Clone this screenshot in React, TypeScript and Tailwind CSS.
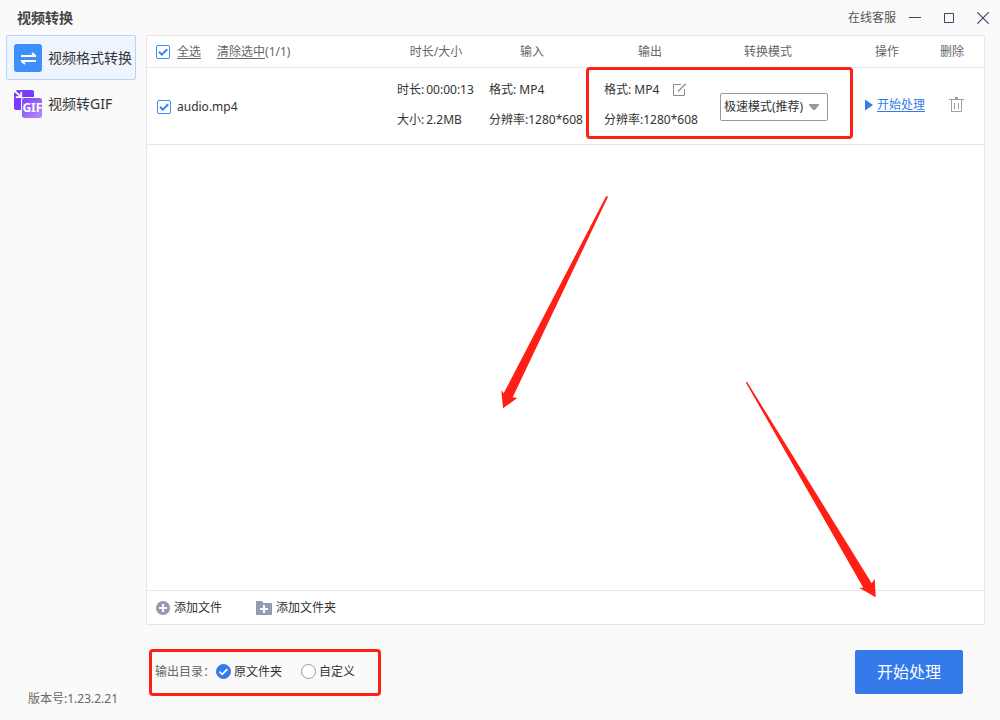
import { useState } from "react";

interface VideoFile {
  name: string;
  duration: string;
  size: string;
  format: string;
  resolution: string;
}

interface CheckboxProps {
  id: string;
  label: string;
  checked: boolean;
  onChange: (checked: boolean) => void;
}

interface RadioProps {
  value: string;
  label: string;
  selected: string;
  onSelect: (value: string) => void;
}

const files: VideoFile[] = [
  { name: "audio.mp4", duration: "00:00:13", size: "2.2MB", format: "MP4", resolution: "1280*608" },
];

const ConvertIcon = () => (
  <svg width="28" height="28" viewBox="0 0 28 28" fill="none" aria-hidden="true">
    <rect width="28" height="28" rx="3" fill="#3e8ffb" />
    <path d="M7 12h15M18 9l3.2 2.8M22 17H7M11 20l-3.2-2.8" stroke="#fff" strokeWidth="1.9" />
  </svg>
);

const GifIcon = () => (
  <svg width="28" height="28" viewBox="0 0 28 28" fill="none" aria-hidden="true">
    <defs>
      <linearGradient id="gif" x1="10" y1="8" x2="26" y2="28" gradientUnits="userSpaceOnUse">
        <stop stopColor="#7f43fa" />
        <stop offset="1" stopColor="#b18cfb" />
      </linearGradient>
    </defs>
    <rect width="20" height="20" rx="2" fill="#7a3cf8" />
    <path d="M0 0h3L0 3z" fill="#fafafa" />
    <path d="M1 1.5l6 5M7.3 1.8v5.4H1.8" stroke="#fafafa" strokeWidth="1.7" />
    <rect x="7" y="7" width="22" height="22" rx="3" fill="#fafafa" />
    <rect x="8" y="8" width="20" height="20" rx="2.5" fill="url(#gif)" />
    <text x="18.4" y="22.2" textAnchor="middle" fontSize="12" fontWeight="700" fontFamily="Noto Sans" fill="#fff">
      GIF
    </text>
  </svg>
);

const EditIcon = () => (
  <svg width="14" height="14" viewBox="0 0 14 14" fill="none" stroke="#8a8a8a" aria-hidden="true">
    <path d="M8 1.5H.5v11h11V6" />
    <path d="M5 8.5L12.8.8" strokeWidth="1.2" />
  </svg>
);

const TrashIcon = () => (
  <svg width="15" height="16" viewBox="0 0 15 16" fill="none" stroke="#a0a0a0" aria-hidden="true">
    <path d="M0 2.5h15M2.5 3v11.5h10V3M5.5 6v6M9.5 6v6" />
    <path d="M6 1h3" strokeWidth="2" />
  </svg>
);

const AddFileIcon = () => (
  <svg width="14" height="14" viewBox="0 0 14 14" aria-hidden="true">
    <circle cx="7" cy="7" r="7" fill="#949bb0" />
    <path d="M7 3v8M3 7h8" stroke="#fff" strokeWidth="2" />
  </svg>
);

const AddFolderIcon = () => (
  <svg width="16" height="14" viewBox="0 0 16 14" aria-hidden="true">
    <path d="M0 0h6l1.5 2H16v12H0z" fill="#949bb0" />
    <path d="M8 4v8M4 8h8" stroke="#fff" strokeWidth="2" />
  </svg>
);

const Checkbox = ({ id, label, checked, onChange }: CheckboxProps) => (
  <span className="relative flex size-3.5 shrink-0">
    <input
      id={id}
      type="checkbox"
      aria-label={label}
      checked={checked}
      onChange={(e) => onChange(e.target.checked)}
      className="size-3.5 appearance-none rounded-xs border border-[#3e8ffb] bg-white"
    />
    {checked && (
      <svg className="pointer-events-none absolute inset-0" width="14" height="14" viewBox="0 0 14 14" fill="none">
        <path d="M3 6.8l2.8 2.8L11.2 4.2" stroke="#3582f5" strokeWidth="2" />
      </svg>
    )}
  </span>
);

const Radio = ({ value, label, selected, onSelect }: RadioProps) => (
  <label className="flex items-center gap-[3px]">
    <span className="relative flex size-[15px]">
      <input
        type="radio"
        name="output"
        value={value}
        checked={selected === value}
        onChange={() => onSelect(value)}
        className="size-[15px] appearance-none rounded-full border border-[#999] bg-white checked:border-[#347aeb] checked:bg-[#347aeb]"
      />
      {selected === value && (
        <svg className="pointer-events-none absolute inset-0" width="15" height="15" viewBox="0 0 15 15" fill="none">
          <path d="M3.4 7.6l2.8 2.7 5.2-5.2" stroke="#fff" strokeWidth="1.8" />
        </svg>
      )}
    </span>
    {label}
  </label>
);

const TitleBar = () => (
  <header className="flex h-[35px] shrink-0 items-center justify-between pr-[11px] pl-[17px]">
    <h1 className="text-sm font-bold text-[#444]">视频转换</h1>
    <div className="flex items-center text-[#3d4663]">
      <a href="#service" className="mr-[13px] text-[#555]">在线客服</a>
      <button type="button" aria-label="最小化" className="mr-[23px]">
        <svg width="12" height="12" viewBox="0 0 12 12" stroke="currentColor">
          <path d="M0 5.5h12" />
        </svg>
      </button>
      <button type="button" aria-label="最大化" className="mr-[23px]">
        <svg width="10" height="10" viewBox="0 0 10 10" fill="none" stroke="currentColor">
          <path d="M.5.5h9v9h-9z" />
        </svg>
      </button>
      <button type="button" aria-label="关闭">
        <svg width="12" height="12" viewBox="0 0 12 12" stroke="currentColor" strokeWidth="1.2">
          <path d="M.3.3l11.4 11.4M11.7.3L.3 11.7" />
        </svg>
      </button>
    </div>
  </header>
);

const Sidebar = () => (
  <aside className="flex w-[146px] shrink-0 flex-col justify-between pr-2.5 pb-[13px] pl-1.5">
    <nav className="flex flex-col gap-px text-sm whitespace-nowrap">
      <button
        type="button"
        className="flex h-[45px] items-center gap-1.5 rounded-xs border border-[#b5d5fd] bg-[#eef5ff] pl-[7px]"
      >
        <ConvertIcon />
        视频格式转换
      </button>
      <button type="button" className="flex h-[45px] items-center gap-1.5 border border-transparent pl-[7px]">
        <GifIcon />
        视频转GIF
      </button>
    </nav>
    <p className="pl-[22px] text-[#666]">版本号:1.23.2.21</p>
  </aside>
);

const App = () => {
  const [selected, setSelected] = useState<string[]>(files.map((file) => file.name));
  const [output, setOutput] = useState("source");

  const toggle = (name: string, checked: boolean) =>
    setSelected(checked ? [...selected, name] : selected.filter((item) => item !== name));

  return (
    <div className="relative flex h-screen flex-col overflow-hidden bg-[#fafafa] font-['Noto_Sans','Noto_Sans_CJK_SC',sans-serif] text-xs text-[#333]">
      <TitleBar />
      <div className="flex min-h-0 flex-1">
        <Sidebar />
        <main className="flex min-w-0 flex-1 flex-col">
          <section className="relative mr-[15px] flex flex-1 flex-col border border-[#e6e6e6] bg-white">
            <table className="w-full table-fixed border-collapse text-left whitespace-nowrap">
              <colgroup>
                <col />
                <col className="w-[92px]" />
                <col className="w-[110px]" />
                <col className="w-[116px]" />
                <col className="w-[132px]" />
                <col className="w-[94px]" />
                <col className="w-[50px]" />
              </colgroup>
              <thead>
                <tr className="h-[31px] border-b border-[#e6e6e6] text-[#666] [&>th]:pt-0.5">
                  <th className="pl-[9px] font-normal">
                    <div className="flex items-center">
                      <Checkbox
                        id="all"
                        label="全选"
                        checked={selected.length === files.length}
                        onChange={(checked) => setSelected(checked ? files.map((file) => file.name) : [])}
                      />
                      <label htmlFor="all" className="ml-[7px] underline underline-offset-2">全选</label>
                      <button type="button" onClick={() => setSelected([])} className="ml-4 underline underline-offset-2">
                        清除选中
                      </button>
                      <span>({selected.length}/{files.length})</span>
                    </div>
                  </th>
                  <th className="text-center font-normal">时长/大小</th>
                  <th className="pr-2.5 text-center font-normal">输入</th>
                  <th className="text-center font-normal">输出</th>
                  <th className="pr-3 text-center font-normal">转换模式</th>
                  <th className="text-center font-normal">操作</th>
                  <th className="pr-3.5 text-center font-normal">删除</th>
                </tr>
              </thead>
              <tbody>
                {files.map((file) => (
                  <tr key={file.name} className="h-[77px] border-b border-[#e6e6e6]">
                    <td className="pt-0.5 pl-2.5">
                      <div className="flex items-center gap-1.5">
                        <Checkbox
                          id={file.name}
                          label={file.name}
                          checked={selected.includes(file.name)}
                          onChange={(checked) => toggle(file.name, checked)}
                        />
                        <label htmlFor={file.name}>{file.name}</label>
                      </div>
                    </td>
                    <td className="pb-0.5 pl-[7px] leading-[30px]">
                      <p className="flex gap-0.5"><span>时长:</span>{file.duration}</p>
                      <p className="flex gap-0.5"><span>大小:</span>{file.size}</p>
                    </td>
                    <td className="pb-0.5 pl-[7px] leading-[30px]">
                      <p>格式: {file.format}</p>
                      <p>分辨率:{file.resolution}</p>
                    </td>
                    <td className="pb-0.5 pl-3 leading-[30px]">
                      <p className="flex items-center gap-3.5">
                        格式: {file.format}
                        <button type="button" aria-label="编辑"><EditIcon /></button>
                      </p>
                      <p>分辨率:{file.resolution}</p>
                    </td>
                    <td className="pt-0.5 pl-3">
                      <div className="relative w-[108px]">
                        <select
                          aria-label="转换模式"
                          className="block h-7 w-full appearance-none rounded-xs border border-[#999] bg-white pl-[3px]"
                        >
                          <option>极速模式(推荐)</option>
                        </select>
                        <svg
                          className="pointer-events-none absolute top-[11px] right-2"
                          width="12"
                          height="6"
                          viewBox="0 0 12 6"
                          fill="#999"
                        >
                          <path d="M1 0h10v1L7 6H5L1 1z" />
                        </svg>
                      </div>
                    </td>
                    <td className="pb-0.5 pl-[25px]">
                      <button type="button" className="flex items-center gap-1 text-[#347aeb]">
                        <svg width="8" height="12" viewBox="0 0 8 12" fill="currentColor" aria-hidden="true">
                          <path d="M0 0.5L8 6l-8 5.5z" />
                        </svg>
                        <span className="underline underline-offset-2">开始处理</span>
                      </button>
                    </td>
                    <td className="pr-1.5 pb-0.5">
                      <button type="button" aria-label="删除" className="mx-auto block"><TrashIcon /></button>
                    </td>
                  </tr>
                ))}
              </tbody>
            </table>
            <div className="flex-1" />
            <div className="flex h-[34px] items-center gap-[34px] border-t border-[#e6e6e6] pl-[9px]">
              <button type="button" className="flex items-center gap-1"><AddFileIcon />添加文件</button>
              <button type="button" className="flex items-center gap-1"><AddFolderIcon />添加文件夹</button>
            </div>
            {/* highlight around output format and mode */}
            <div className="pointer-events-none absolute top-[31px] right-[131px] h-[72px] w-[267px] rounded-sm border-3 border-[#ff1f14]" />
          </section>
          <footer className="flex h-[95px] shrink-0 items-start justify-between pt-6 pr-[37px] pl-[3px]">
            <div
              role="radiogroup"
              aria-labelledby="output-label"
              className="flex h-[47px] w-[232px] items-center rounded-sm border-3 border-[#ff1f14] pb-0.5 pl-[3px]"
            >
              <span id="output-label" className="w-[61px] whitespace-nowrap text-[#666]">输出目录：</span>
              <div className="flex gap-[19px]">
                <Radio value="source" label="原文件夹" selected={output} onSelect={setOutput} />
                <Radio value="custom" label="自定义" selected={output} onSelect={setOutput} />
              </div>
            </div>
            <button type="button" className="mt-px h-11 w-[108px] rounded-xs bg-[#347aeb] text-base text-white">
              开始处理
            </button>
          </footer>
        </main>
      </div>
      <svg
        className="pointer-events-none absolute right-[120px] bottom-[120px]"
        width="380"
        height="410"
        viewBox="500 190 380 410"
        fill="#ff1f14"
        aria-hidden="true"
      >
        <path d="M606.2 196l1.8.8-95.3 200.5 4.6.7-14.3 10.3-1.7-18 2.4 3z" />
        <path d="M745.8 382.5l1.2-.8 124.7 201.6 3-4.3 1 18.3-16.7-9.6 4.3 0z" />
      </svg>
    </div>
  );
};

export default App;
